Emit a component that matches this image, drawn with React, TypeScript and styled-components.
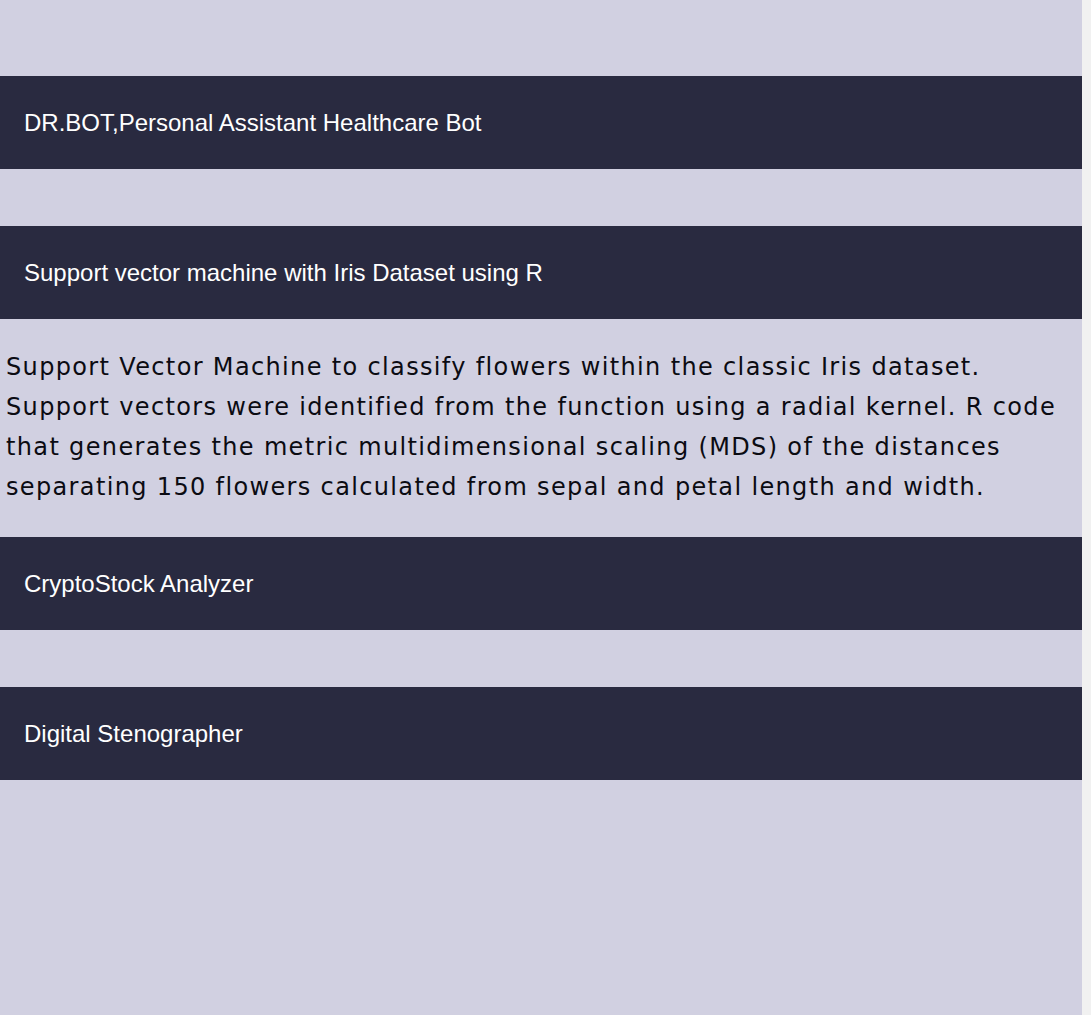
import React from "react";
import styled, { createGlobalStyle } from "styled-components";

const GlobalStyle = createGlobalStyle`
  html, body {
    margin: 0;
    padding: 0;
    background: #f1f1f1;
  }
  body {
    font-family: "Liberation Sans", Arial, sans-serif;
  }
`;

const Page = styled.main`
  width: 1082px;
  min-height: 1015px;
  background: #d1d0e1;
  padding-top: 76px;
  box-sizing: border-box;
`;

const ProjectList = styled.ul`
  list-style: none;
  margin: 0;
  padding: 0;
  display: flex;
  flex-direction: column;
`;

const Project = styled.li`
  display: flex;
  flex-direction: column;
`;

const ProjectTitle = styled.h2`
  margin: 0;
  height: 93px;
  display: flex;
  align-items: center;
  padding: 0 24px;
  background: #292a40;
  color: #ffffff;
  font-family: "Liberation Sans", Arial, sans-serif;
  font-size: 24px;
  font-weight: 400;
`;

const ProjectBody = styled.div`
  padding: 28px 6px 29px;
`;

const Description = styled.p`
  margin: 0;
  padding-bottom: 1px;
  color: #0b0b12;
  font-family: "DejaVu Sans", "Open Sans", sans-serif;
  font-size: 24px;
  letter-spacing: 1.35px;
  line-height: 40px;
  font-weight: 400;
`;

type Item = { title: string; description?: string };

const items: Item[] = [
  { title: "DR.BOT,Personal Assistant Healthcare Bot" },
  {
    title: "Support vector machine with Iris Dataset using R",
    description:
      "Support Vector Machine to classify flowers within the classic Iris dataset. Support vectors were identified from the function using a radial kernel. R code that generates the metric multidimensional scaling (MDS) of the distances separating 150 flowers calculated from sepal and petal length and width.",
  },
  { title: "CryptoStock Analyzer" },
  { title: "Digital Stenographer" },
];

export default function App() {
  return (
    <>
      <GlobalStyle />
      <Page>
        <ProjectList>
          {items.map((item) => (
            <Project key={item.title}>
              <ProjectTitle>{item.title}</ProjectTitle>
              <ProjectBody>
                {item.description && <Description>{item.description}</Description>}
              </ProjectBody>
            </Project>
          ))}
        </ProjectList>
      </Page>
    </>
  );
}
